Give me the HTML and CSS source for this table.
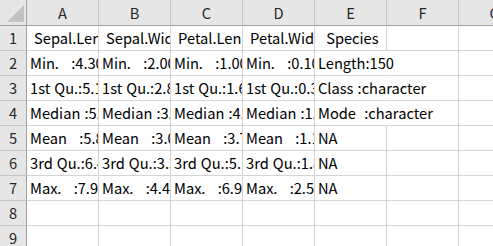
FILE: index.html
```html
<!DOCTYPE html>
<html lang="ja">
<head>
<meta charset="utf-8">
<link rel="stylesheet" href="styles.css">
</head>
<body>
<div class="sheet">
  <div class="hd corner"><svg class="tri" width="27" height="26" viewBox="0 0 27 26"><polygon points="24,5 24,22 7,22" fill="#c2c2c2"/></svg></div>
  <div class="hd col">A</div>
  <div class="hd col">B</div>
  <div class="hd col">C</div>
  <div class="hd col">D</div>
  <div class="hd col">E</div>
  <div class="hd col">F</div>
  <div class="hd col">G</div>

  <div class="hd row">1</div>
  <div class="c"> Sepal.Length</div>
  <div class="c"> Sepal.Width</div>
  <div class="c"> Petal.Length</div>
  <div class="c"> Petal.Width</div>
  <div class="c">  Species</div>
  <div class="c"></div>
  <div class="c"></div>

  <div class="hd row">2</div>
  <div class="c">Min.   :4.300  </div>
  <div class="c">Min.   :2.000  </div>
  <div class="c">Min.   :1.000  </div>
  <div class="c">Min.   :0.100  </div>
  <div class="c spill">Length:150</div>
  <div class="c"></div>
  <div class="c"></div>

  <div class="hd row">3</div>
  <div class="c">1st Qu.:5.100  </div>
  <div class="c">1st Qu.:2.800  </div>
  <div class="c">1st Qu.:1.600  </div>
  <div class="c">1st Qu.:0.300  </div>
  <div class="c spill">Class :character</div>
  <div class="c"></div>
  <div class="c"></div>

  <div class="hd row">4</div>
  <div class="c">Median :5.800  </div>
  <div class="c">Median :3.000  </div>
  <div class="c">Median :4.350  </div>
  <div class="c">Median :1.300  </div>
  <div class="c spill">Mode  :character</div>
  <div class="c"></div>
  <div class="c"></div>

  <div class="hd row">5</div>
  <div class="c">Mean   :5.843  </div>
  <div class="c">Mean   :3.057  </div>
  <div class="c">Mean   :3.758  </div>
  <div class="c">Mean   :1.199  </div>
  <div class="c">NA</div>
  <div class="c"></div>
  <div class="c"></div>

  <div class="hd row">6</div>
  <div class="c">3rd Qu.:6.400  </div>
  <div class="c">3rd Qu.:3.300  </div>
  <div class="c">3rd Qu.:5.100  </div>
  <div class="c">3rd Qu.:1.800  </div>
  <div class="c">NA</div>
  <div class="c"></div>
  <div class="c"></div>

  <div class="hd row">7</div>
  <div class="c">Max.   :7.900  </div>
  <div class="c">Max.   :4.400  </div>
  <div class="c">Max.   :6.900  </div>
  <div class="c">Max.   :2.500  </div>
  <div class="c">NA</div>
  <div class="c"></div>
  <div class="c"></div>

  <div class="hd row">8</div>
  <div class="c"></div><div class="c"></div><div class="c"></div><div class="c"></div><div class="c"></div><div class="c"></div><div class="c"></div>

  <div class="hd row">9</div>
  <div class="c"></div><div class="c"></div><div class="c"></div><div class="c"></div><div class="c"></div><div class="c"></div><div class="c"></div>
</div>
</body>
</html>
```

FILE: styles.css
```css
html, body {
  margin: 0;
  padding: 0;
  background: #ffffff;
  overflow: hidden;
}

.sheet {
  display: grid;
  grid-template-columns: 27px repeat(7, 72px);
  grid-template-rows: 26px repeat(9, 25px);
  font-family: "Noto Sans CJK JP", "Noto Sans", sans-serif;
  font-size: 14.67px;
  color: #000000;
  width: 493px;
  height: 246px;
  overflow: hidden;
}

.sheet > div {
  box-sizing: border-box;
  border-right: 1px solid #d4d4d4;
  border-bottom: 1px solid #d4d4d4;
  white-space: pre;
  line-height: 24px;
}

.hd {
  background: #e6e6e6;
  color: #262626;
  text-align: center;
  border-right-color: #c6c6c6 !important;
  border-bottom-color: #c6c6c6 !important;
}

.hd.col {
  border-bottom-color: #a0a0a0 !important;
  line-height: 25px;
}

.hd.row {
  border-right-color: #a0a0a0 !important;
}

.hd.corner {
  border-bottom-color: #a0a0a0 !important;
  border-right-color: #a0a0a0 !important;
}

.tri {
  display: block;
}

.c {
  padding-left: 3px;
  overflow: hidden;
  word-spacing: 0.8px;
}

.c.spill {
  overflow: visible;
  border-right-color: transparent !important;
}
```
